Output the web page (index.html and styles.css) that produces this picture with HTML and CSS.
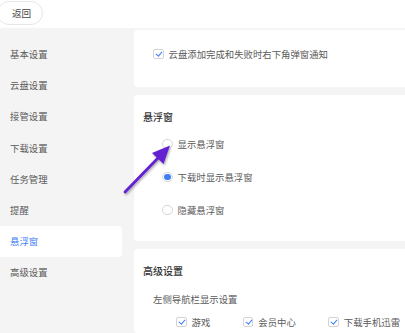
FILE: index.html
```html
<!DOCTYPE html>
<html lang="zh">
<head>
<meta charset="utf-8">
<link rel="stylesheet" href="styles.css">
</head>
<body>
<header class="topbar">
  <button class="back">返回</button>
</header>
<div class="main">
  <nav class="sidebar">
    <div class="nav-item">基本设置</div>
    <div class="nav-item">云盘设置</div>
    <div class="nav-item">接管设置</div>
    <div class="nav-item">下载设置</div>
    <div class="nav-item">任务管理</div>
    <div class="nav-item">提醒</div>
    <div class="nav-item active">悬浮窗</div>
    <div class="nav-item">高级设置</div>
  </nav>
  <section class="content">
    <div class="card card-notify">
      <label class="check-row"><span class="checkbox"></span>云盘添加完成和失败时右下角弹窗通知</label>
    </div>
    <div class="card card-float">
      <div class="card-title">悬浮窗</div>
      <div class="radio-list">
        <label class="radio-row"><span class="radio"></span>显示悬浮窗</label>
        <label class="radio-row"><span class="radio on"></span>下载时显示悬浮窗</label>
        <label class="radio-row"><span class="radio"></span>隐藏悬浮窗</label>
      </div>
    </div>
    <div class="card card-adv">
      <div class="card-title">高级设置</div>
      <div class="sub-label">左侧导航栏显示设置</div>
      <div class="check-grid">
        <label class="check-row"><span class="checkbox"></span>游戏</label>
        <label class="check-row"><span class="checkbox"></span>会员中心</label>
        <label class="check-row"><span class="checkbox"></span>下载手机迅雷</label>
      </div>
    </div>
  </section>
</div>
<svg class="arrow" width="405" height="333" viewBox="0 0 405 333">
  <defs>
    <filter id="sh" x="-20%" y="-20%" width="140%" height="140%">
      <feDropShadow dx="1" dy="1.5" stdDeviation="1" flood-color="#000" flood-opacity="0.35"/>
    </filter>
  </defs>
  <g filter="url(#sh)">
    <line x1="125" y1="192" x2="158" y2="158" stroke="#6420d2" stroke-width="2.8" stroke-linecap="round"/>
    <polygon points="170,145.5 163.5,164 152,153" fill="#6420d2"/>
  </g>
</svg>
</body>
</html>
```
FILE: styles.css
```css
* { box-sizing: border-box; }
html, body { margin: 0; padding: 0; }
body {
  width: 405px;
  height: 333px;
  overflow: hidden;
  font-family: "Noto Sans CJK SC", "Microsoft YaHei", sans-serif;
  font-size: 9.4px;
  color: #5a5a5a;
  background: #f4f4f4;
  position: relative;
}
.topbar {
  height: 28px;
  background: #fff;
  display: flex;
  align-items: flex-start;
  padding-top: 1px;
}
.back {
  margin-left: -3px;
  height: 24px;
  width: 46px;
  padding: 0 0 0 3px;
  border: 1px solid #e6e6e6;
  border-radius: 12px;
  background: #fff;
  font: inherit;
  font-size: 9.6px;
  color: #444;
  line-height: 22px;
}
.main {
  display: flex;
  height: 305px;
}
.sidebar {
  width: 130px;
  flex: none;
  padding-top: 11px;
}
.nav-item {
  width: 122px;
  height: 31.2px;
  line-height: 31.2px;
  padding-left: 10px;
  color: #5a5a5a;
  border-radius: 0 4px 4px 0;
}
.nav-item.active {
  background: #fff;
  color: #3f7ef5;
}
.content {
  flex: 1;
  padding: 2px 0 0 4px;
  display: flex;
  flex-direction: column;
  gap: 8px;
  min-width: 0;
}
.card {
  background: #fff;
  border-radius: 4px 0 0 4px;
  padding-left: 9px;
}
.card-notify {
  height: 57px;
  padding: 18px 0 0 19px;
}
.card-float {
  height: 146px;
  padding-top: 16px;
}
.card-adv {
  flex: 1;
  padding-top: 16px;
}
.card-title {
  font-size: 10px;
  line-height: 12px;
  color: #333;
  font-weight: 500;
}
.check-row {
  display: flex;
  align-items: center;
  height: 12px;
  line-height: 12px;
  white-space: nowrap;
}
.checkbox {
  width: 10.5px;
  height: 10.5px;
  border: 1px solid #d4d4d4;
  border-radius: 2px;
  background: #fff;
  margin-right: 5px;
  position: relative;
  flex: none;
}
.checkbox::after {
  content: "";
  position: absolute;
  left: 3px;
  top: 0.5px;
  width: 2.5px;
  height: 5px;
  border: solid #3f7ef5;
  border-width: 0 1.4px 1.4px 0;
  transform: rotate(40deg);
}
.radio-list {
  margin-top: 4.5px;
  padding-left: 19px;
}
.radio-row {
  display: flex;
  align-items: center;
  height: 33px;
}
.radio {
  width: 10.5px;
  height: 10.5px;
  border: 1px solid #d6d6d6;
  border-radius: 50%;
  margin-right: 5px;
  background: #fff;
  flex: none;
  position: relative;
}
.radio.on::after {
  content: "";
  position: absolute;
  left: 1px;
  top: 1px;
  width: 6.5px;
  height: 6.5px;
  border-radius: 50%;
  background: #3f7ef5;
}
.sub-label {
  margin-top: 16px;
  padding-left: 10px;
  line-height: 12px;
}
.check-grid {
  margin-top: 11px;
  padding-left: 33px;
  display: flex;
  gap: 32.5px;
}
.arrow {
  position: absolute;
  left: 0;
  top: 0;
  pointer-events: none;
}
```
